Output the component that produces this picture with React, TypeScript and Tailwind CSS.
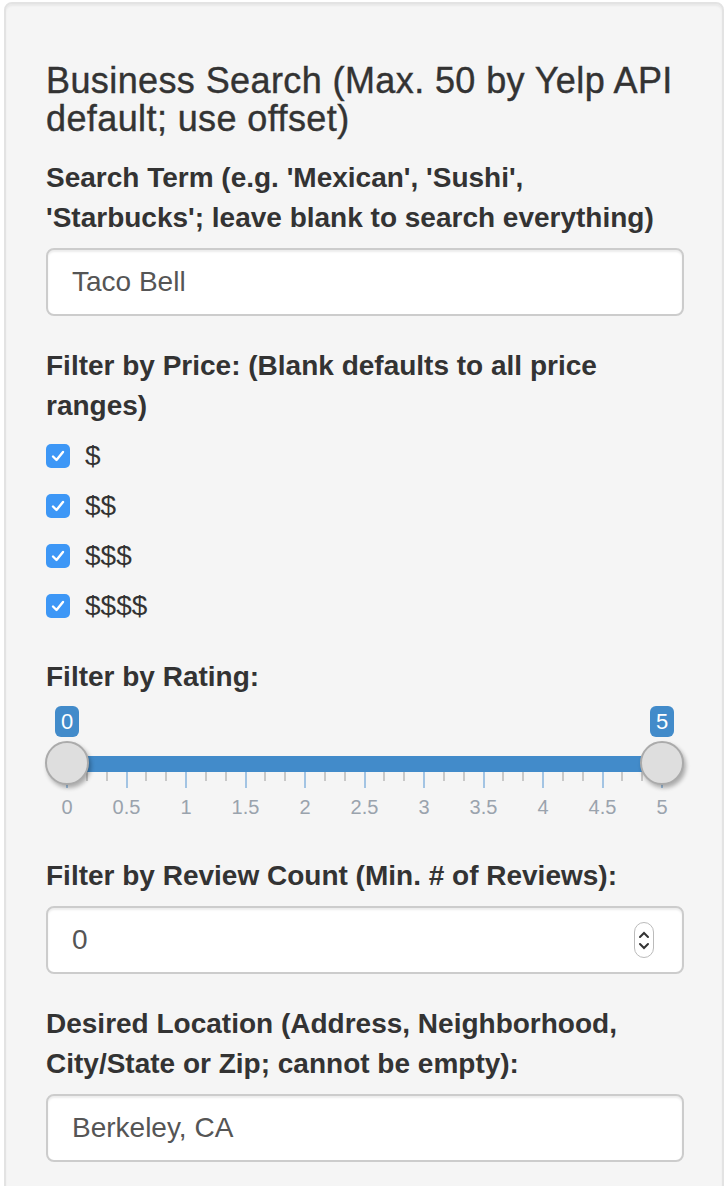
import React from 'react';

const font = { fontFamily: "'Liberation Sans', Arial, sans-serif" };

function Label({ children }: { children: React.ReactNode }) {
  return <div className="text-[28px] leading-[40px] font-bold text-[#333] mb-[10px]">{children}</div>;
}

function TextBox({ value, spinner }: { value: string; spinner?: boolean }) {
  return (
    <div className="h-[68px] bg-white border-2 border-[#ccc] rounded-[8px] px-[24px] flex items-center justify-between shadow-[inset_0_2px_2px_rgba(0,0,0,0.075)]">
      <span className="text-[28px] text-[#555]">{value}</span>
      {spinner && (
        <div className="w-[20px] h-[36px] mr-[4px] rounded-full border border-[#bbb] bg-white flex flex-col items-center justify-center gap-[3px]">
          <svg width="12" height="8" viewBox="0 0 12 8"><path d="M2 6 L6 2 L10 6" fill="none" stroke="#333" strokeWidth="2" strokeLinecap="round" /></svg>
          <svg width="12" height="8" viewBox="0 0 12 8"><path d="M2 2 L6 6 L10 2" fill="none" stroke="#333" strokeWidth="2" strokeLinecap="round" /></svg>
        </div>
      )}
    </div>
  );
}

function Check({ label }: { label: string }) {
  return (
    <div className="h-[40px] flex items-center">
      <div className="w-[24px] h-[24px] rounded-[5px] bg-[#3d97f6] flex items-center justify-center">
        <svg width="14" height="12" viewBox="0 0 14 12"><path d="M2 6.5 L5.5 10 L12 2" fill="none" stroke="white" strokeWidth="2.4" strokeLinecap="round" strokeLinejoin="round" /></svg>
      </div>
      <span className="ml-[15px] text-[28px] text-[#333]">{label}</span>
    </div>
  );
}

function RangeSlider() {
  const start = 21;
  const span = 595;
  const ticks = Array.from({ length: 31 }, (_, i) => i);
  const labels = ['0', '0.5', '1', '1.5', '2', '2.5', '3', '3.5', '4', '4.5', '5'];
  return (
    <div className="relative h-[119px]">
      <div className="absolute top-[49px] h-[16px] bg-[#428bca]" style={{ left: start, width: span }} />
      {ticks.map((i) => (
        <div
          key={i}
          className={i % 3 === 0 ? 'absolute top-[65px] w-[2px] h-[16px] bg-[#a3c4e3]' : 'absolute top-[65px] w-[2px] h-[9px] bg-[#c8c8c8]'}
          style={{ left: start - 1 + (span * i) / 30 }}
        />
      ))}
      {labels.map((l, i) => (
        <div key={l} className="absolute top-[88px] w-[60px] -ml-[30px] text-center text-[20px] leading-[24px] text-[#9aa3ad]" style={{ left: start + (span * i) / 10 }}>
          {l}
        </div>
      ))}
      {[0, 1].map((k) => (
        <React.Fragment key={k}>
          <div className="absolute top-[-1px] w-[24px] h-[31px] -ml-[12px] rounded-[6px] bg-[#428bca] text-white text-[22px] leading-[31px] text-center" style={{ left: start + span * k }}>
            {k === 0 ? '0' : '5'}
          </div>
          <div className="absolute top-[34px] w-[44px] h-[44px] -ml-[22px] rounded-full bg-[#dedede] border-2 border-[#ababab] shadow-[2px_3px_4px_rgba(0,0,0,0.3)]" style={{ left: start + span * k }} />
        </React.Fragment>
      ))}
    </div>
  );
}

export default function App() {
  return (
    <div className="w-[726px] h-[1186px] bg-white overflow-hidden pt-[2px] pl-[4px]" style={font}>
      <div className="w-[720px] bg-[#f5f5f5] border-2 border-[#e3e3e3] rounded-[8px] pt-[38px] pl-[40px] pr-[38px] pb-[40px] shadow-[inset_0_2px_2px_rgba(0,0,0,0.05)]">
        <h4 className="mt-[20px] mb-[20px] text-[36px] leading-[38px] tracking-[0.4px] text-[#333] [-webkit-text-stroke:0.4px_#333]">
          Business Search (Max. 50 by Yelp API<br />default; use offset)
        </h4>

        <div className="mb-[30px]">
          <Label>Search Term (e.g. 'Mexican', 'Sushi',<br />'Starbucks'; leave blank to search everything)</Label>
          <TextBox value="Taco Bell" />
        </div>

        <div className="mb-[31px]">
          <Label>Filter by Price: (Blank defaults to all price<br />ranges)</Label>
          <div className="flex flex-col gap-[10px]">
            <Check label="$" />
            <Check label="$$" />
            <Check label="$$$" />
            <Check label="$$$$" />
          </div>
        </div>

        <div className="mb-[30px]">
          <Label>Filter by Rating:</Label>
          <RangeSlider />
        </div>

        <div className="mb-[30px]">
          <Label>Filter by Review Count (Min. # of Reviews):</Label>
          <TextBox value="0" spinner />
        </div>

        <div className="mb-[30px]">
          <Label>Desired Location (Address, Neighborhood,<br />City/State or Zip; cannot be empty):</Label>
          <TextBox value="Berkeley, CA" />
        </div>
      </div>
    </div>
  );
}
